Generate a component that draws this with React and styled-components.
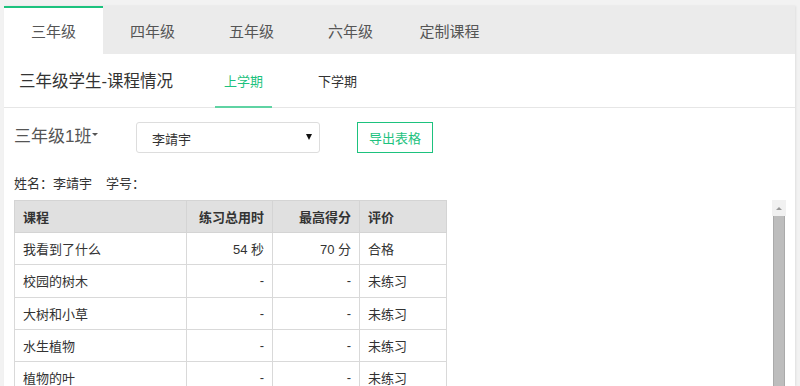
import React from "react";
import styled, { createGlobalStyle } from "styled-components";

const Global = createGlobalStyle`
  html, body { margin: 0; padding: 0; background: #f2f2f2; overflow: hidden; }
  body { font-family: "Liberation Sans", "Noto Sans CJK SC", sans-serif; color: #333; }
  * { box-sizing: border-box; }
`;

const Card = styled.div`
  margin: 6px 5px 0 4px;
  width: 791px;
  height: 380px;
  background: #fff;
  box-shadow: 1px 0 2px rgba(0,0,0,0.08);
  display: flex;
  flex-direction: column;
  overflow: hidden;
`;

const TabBar = styled.div`
  display: flex;
  height: 48px;
  background: #ebebeb;
  flex-shrink: 0;
`;

const Tab = styled.div`
  width: 99px;
  height: 48px;
  display: flex;
  align-items: center;
  justify-content: center;
  font-size: 15px;
  color: #555;
  background: ${p => (p.$active ? "#fff" : "transparent")};
  border-top: 2px solid ${p => (p.$active ? "#1dc27e" : "transparent")};
  padding-bottom: 2px;
`;

const Header = styled.div`
  display: flex;
  align-items: stretch;
  height: 54px;
  border-bottom: 1px solid #e6e6e6;
  padding-left: 15px;
  flex-shrink: 0;
`;

const Title = styled.div`
  font-size: 16.5px;
  color: #333;
  display: flex;
  align-items: center;
  padding-bottom: 2px;
  width: 196px;
`;

const SubTab = styled.div`
  width: 57px;
  display: flex;
  align-items: center;
  justify-content: center;
  font-size: 13px;
  color: ${p => (p.$active ? "#1dc27e" : "#333")};
  border-bottom: 2px solid ${p => (p.$active ? "#5fd3a3" : "transparent")};
  margin-right: 37px;
  margin-bottom: -1px;
`;

const Body = styled.div`
  display: flex;
  flex: 1;
  padding: 14px 0 0 10px;
`;

const Main = styled.div`
  width: 436px;
  display: flex;
  flex-direction: column;
`;

const Controls = styled.div`
  display: flex;
  align-items: flex-start;
  height: 31px;
`;

const ClassPicker = styled.div`
  font-size: 17px;
  color: #555;
  width: 122px;
  display: flex;
  align-items: center;
  height: 24px;
`;

const Caret = styled.span`
  display: inline-block;
  width: 0;
  height: 0;
  border-left: 3.5px solid transparent;
  border-right: 3.5px solid transparent;
  border-top: 3.5px solid #555;
  margin-left: 1px;
  margin-top: 1px;
`;

const Select = styled.div`
  width: 184px;
  height: 31px;
  border: 1px solid #ddd;
  border-radius: 3px;
  display: flex;
  align-items: center;
  justify-content: space-between;
  padding: 2px 7px 0 15px;
  font-size: 13px;
  color: #333;
  margin-right: 37px;
`;

const SelArrow = styled.span`
  width: 0;
  height: 0;
  border-left: 3px solid transparent;
  border-right: 3px solid transparent;
  border-top: 6px solid #111;
  margin-top: -4px;
`;

const ExportButton = styled.div`
  width: 76px;
  height: 31px;
  border: 1px solid #1dc27e;
  color: #1dc27e;
  font-size: 13px;
  display: flex;
  align-items: center;
  justify-content: center;
`;

const Info = styled.div`
  font-size: 13px;
  color: #333;
  margin-top: 20px;
  height: 17px;
  & span { margin-left: 14px; }
`;

const Table = styled.table`
  margin-top: 10px;
  border-collapse: collapse;
  width: 433px;
  table-layout: fixed;
  font-size: 13px;
  color: #333;
`;

const Th = styled.th`
  height: 32px;
  background: #e0e0e0;
  border: 1px solid #d4d4d4;
  font-weight: bold;
  text-align: ${p => p.$align || "left"};
  padding: 0 8px;
`;

const Td = styled.td`
  height: 32.3px;
  border: 1px solid #d9d9d9;
  text-align: ${p => p.$align || "left"};
  padding: 0 8px;
`;

const ScrollBar = styled.div`
  margin-left: 322px;
  margin-top: 78px;
  width: 14px;
  display: flex;
  flex-direction: column;
  align-items: center;
`;

const ScrollArrow = styled.div`
  width: 14px;
  height: 16px;
  background: #f1f1f1;
  display: flex;
  align-items: center;
  justify-content: center;
  &::after {
    content: "";
    border-left: 3px solid transparent;
    border-right: 3px solid transparent;
    border-bottom: 3px solid #999;
    margin-top: 1px;
  }
`;

const Thumb = styled.div`
  width: 12px;
  height: 200px;
  background: #bdbdbd;
  border-left: 1px solid #aaa;
  border-right: 1px solid #aaa;
`;

const tabs = ["三年级", "四年级", "五年级", "六年级", "定制课程"];
const rows = [
  ["我看到了什么", "54 秒", "70 分", "合格"],
  ["校园的树木", "-", "-", "未练习"],
  ["大树和小草", "-", "-", "未练习"],
  ["水生植物", "-", "-", "未练习"],
  ["植物的叶", "-", "-", "未练习"],
];

export default function App() {
  return (
    <>
      <Global />
      <Card>
        <TabBar>
          {tabs.map((t, i) => (
            <Tab key={t} $active={i === 0}>{t}</Tab>
          ))}
        </TabBar>
        <Header>
          <Title>三年级学生-课程情况</Title>
          <SubTab $active>上学期</SubTab>
          <SubTab>下学期</SubTab>
        </Header>
        <Body>
          <Main>
            <Controls>
              <ClassPicker>三年级1班<Caret /></ClassPicker>
              <Select>李靖宇<SelArrow /></Select>
              <ExportButton>导出表格</ExportButton>
            </Controls>
            <Info>姓名：李靖宇<span>学号：</span></Info>
            <Table>
              <colgroup>
                <col style={{ width: 172 }} />
                <col style={{ width: 86 }} />
                <col style={{ width: 87 }} />
                <col style={{ width: 87 }} />
              </colgroup>
              <thead>
                <tr>
                  <Th>课程</Th>
                  <Th $align="right">练习总用时</Th>
                  <Th $align="right">最高得分</Th>
                  <Th>评价</Th>
                </tr>
              </thead>
              <tbody>
                {rows.map(r => (
                  <tr key={r[0]}>
                    <Td>{r[0]}</Td>
                    <Td $align="right">{r[1]}</Td>
                    <Td $align="right">{r[2]}</Td>
                    <Td>{r[3]}</Td>
                  </tr>
                ))}
              </tbody>
            </Table>
          </Main>
          <ScrollBar>
            <ScrollArrow />
            <Thumb />
          </ScrollBar>
        </Body>
      </Card>
    </>
  );
}
